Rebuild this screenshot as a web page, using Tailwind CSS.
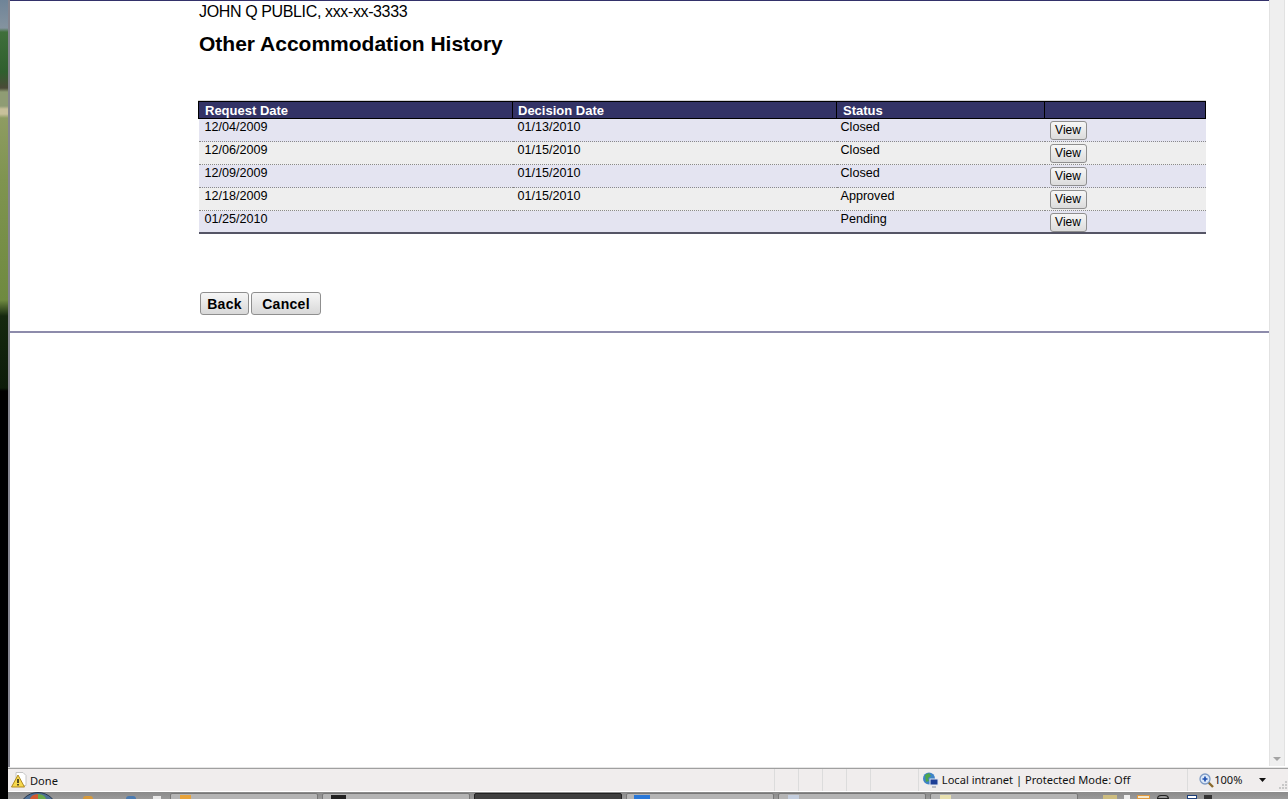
<!doctype html>
<html>
<head>
<meta charset="utf-8">
<title>Other Accommodation History</title>
<script src="https://cdn.jsdelivr.net/npm/@tailwindcss/browser@4"></script>
</head>
<body class="h-[799px] w-[1288px] overflow-hidden bg-white font-['Liberation_Sans',Arial,sans-serif] text-black">
  <div class="flex h-[768px] border-b border-[#e6e6e6]">
    <!-- desktop wallpaper showing at the window edge -->
    <div class="-mb-px w-2 shrink-0 bg-[linear-gradient(to_bottom,#6f8498_0px,#84939f_28px,#3f6f3a_32px,#2f5f2e_72px,#4a4a38_88px,#8f9c74_92px,#8f9c74_106px,#c8c09a_109px,#c8c09a_114px,#8e9c62_118px,#7f9450_180px,#6f8a40_300px,#16280f_316px,#0c1c0a_388px,#000_391px)]"></div>
    <div class="w-0.5 shrink-0 bg-[#85858f]"></div>
    <main class="w-[1259px] shrink-0">
      <div class="h-[333px] border-b-2 border-[#8d8bab]">
        <div class="h-px bg-[#33316a]"></div>
        <div class="ml-[189px] w-[1007px]">
          <p class="mt-[2px] text-base leading-[18px] tracking-[-0.37px]">JOHN Q PUBLIC, xxx-xx-3333</p>
          <h1 class="mt-[11px] text-[21px] leading-[24px] font-bold">Other Accommodation History</h1>
          <table class="mt-[45px] -ml-px w-[1008px] table-fixed border-collapse text-[12.6px] shadow-[0_-1px_0_#d4d4d4]">
            <thead>
              <tr class="h-[17px] bg-[#333366] text-left text-[13px] text-white">
                <th class="w-[314px] border border-black pl-[6px] leading-[15px] font-bold">Request Date</th>
                <th class="w-[324px] border border-black pl-[5px] leading-[15px] font-bold">Decision Date</th>
                <th class="w-[208px] border border-black pl-[6px] leading-[15px] font-bold">Status</th>
                <th class="border border-black"></th>
              </tr>
            </thead>
            <tbody>
              <tr class="h-[23px] border-b border-dotted border-[#8a8a8a] bg-[#e4e4f1] align-top">
                <td class="pl-[6px] leading-[17px]">12/04/2009</td>
                <td class="pl-[5px] leading-[17px]">01/13/2010</td>
                <td class="pl-[4px] leading-[17px]">Closed</td>
                <td class="pl-[5px] pt-[2px]"><button class="block h-[19px] w-[37px] rounded-[3px] border border-[#8f8f8f] bg-[linear-gradient(#f6f6f6,#dcdcdc)] text-xs leading-[17px] text-black">View</button></td>
              </tr>
              <tr class="h-[23px] border-b border-dotted border-[#8a8a8a] bg-[#eeeeee] align-top">
                <td class="pl-[6px] leading-[17px]">12/06/2009</td>
                <td class="pl-[5px] leading-[17px]">01/15/2010</td>
                <td class="pl-[4px] leading-[17px]">Closed</td>
                <td class="pl-[5px] pt-[2px]"><button class="block h-[19px] w-[37px] rounded-[3px] border border-[#8f8f8f] bg-[linear-gradient(#f6f6f6,#dcdcdc)] text-xs leading-[17px] text-black">View</button></td>
              </tr>
              <tr class="h-[23px] border-b border-dotted border-[#8a8a8a] bg-[#e4e4f1] align-top">
                <td class="pl-[6px] leading-[17px]">12/09/2009</td>
                <td class="pl-[5px] leading-[17px]">01/15/2010</td>
                <td class="pl-[4px] leading-[17px]">Closed</td>
                <td class="pl-[5px] pt-[2px]"><button class="block h-[19px] w-[37px] rounded-[3px] border border-[#8f8f8f] bg-[linear-gradient(#f6f6f6,#dcdcdc)] text-xs leading-[17px] text-black">View</button></td>
              </tr>
              <tr class="h-[23px] border-b border-dotted border-[#8a8a8a] bg-[#eeeeee] align-top">
                <td class="pl-[6px] leading-[17px]">12/18/2009</td>
                <td class="pl-[5px] leading-[17px]">01/15/2010</td>
                <td class="pl-[4px] leading-[17px]">Approved</td>
                <td class="pl-[5px] pt-[2px]"><button class="block h-[19px] w-[37px] rounded-[3px] border border-[#8f8f8f] bg-[linear-gradient(#f6f6f6,#dcdcdc)] text-xs leading-[17px] text-black">View</button></td>
              </tr>
              <tr class="h-[22px] border-b-2 border-[#555566] bg-[#e4e4f1] align-top">
                <td class="pl-[6px] leading-[17px]">01/25/2010</td>
                <td class="pl-[5px] leading-[17px]"></td>
                <td class="pl-[4px] leading-[17px]">Pending</td>
                <td class="pl-[5px] pt-[2px]"><button class="block h-[19px] w-[37px] rounded-[3px] border border-[#8f8f8f] bg-[linear-gradient(#f6f6f6,#dcdcdc)] text-xs leading-[17px] text-black">View</button></td>
              </tr>
            </tbody>
          </table>
          <div class="mt-[58px] ml-px flex gap-0.5">
            <button class="h-[23px] w-[49px] rounded-[3px] border border-[#8f8f8f] bg-[linear-gradient(#f6f6f6,#d8d8d8)] text-sm font-bold tracking-[0.3px]">Back</button>
            <button class="h-[23px] w-[70px] rounded-[3px] border border-[#8f8f8f] bg-[linear-gradient(#f6f6f6,#d8d8d8)] text-sm font-bold tracking-[0.3px]">Cancel</button>
          </div>
        </div>
      </div>
    </main>
    <!-- disabled scrollbar -->
    <div class="mb-px flex w-4 shrink-0 flex-col justify-end border-x border-[#e2e2e2] bg-[#efefef] pb-[5px]">
      <svg class="mx-auto" width="8" height="4" viewBox="0 0 8 4"><path d="M0 0h8L4 4z" fill="#a4a4a4"/></svg>
    </div>
  </div>
  <div class="flex h-[31px]">
    <div class="w-2 shrink-0 bg-black"></div>
    <div class="w-[1280px]">
      <!-- status bar -->
      <footer class="flex h-[24px] items-center border-t border-b border-t-[#a0a0a0] border-b-white bg-[#f0eded] font-['Noto_Sans','Open_Sans',sans-serif] text-[11.1px] text-[#111]">
        <svg class="ml-[3px] shrink-0" width="16" height="16" viewBox="0 0 16 16">
          <path d="M5 0.500h7l3 3v10H5z" fill="#fff" stroke="#c4c4c4"/>
          <path d="M7 3L13.500 15H0.500z" fill="#f6d84c" stroke="#b08a20"/>
          <path d="M6.300 7h1.400v4H6.300zM6.300 12h1.400v1.500H6.300z" fill="#111"/>
        </svg>
        <span class="ml-[3px] w-[746px] pt-px leading-none">Done</span>
        <span class="h-full w-6 border-l border-[#dcdcdc]"></span>
        <span class="h-full w-6 border-l border-[#dcdcdc]"></span>
        <span class="h-full w-6 border-l border-[#dcdcdc]"></span>
        <span class="h-full w-6 border-l border-[#dcdcdc]"></span>
        <span class="h-full w-12 border-l border-[#dcdcdc]"></span>
        <span class="flex h-full w-[270px] items-center border-l border-[#dcdcdc] pl-[3px]">
          <svg class="shrink-0" width="17" height="17" viewBox="0 0 17 17">
            <circle cx="7" cy="6.500" r="6" fill="#3f83c6"/>
            <path d="M3 3l4-2 2 3-3 2 1 3-3 1zM10 8l3-1v3l-2 1z" fill="#4fa64a"/>
            <rect x="8" y="7" width="8" height="6" fill="#1c3e96" stroke="#dfe6f2"/>
            <path d="M10 14h4v2h-4z" fill="#b8bcc4"/>
          </svg>
          <span class="ml-[3px] whitespace-nowrap pt-px">Local intranet | Protected Mode: Off</span>
        </span>
        <span class="flex h-full w-[83px] items-center border-l border-[#dcdcdc] pl-[11px]">
          <svg class="shrink-0" width="15" height="15" viewBox="0 0 15 15">
            <path d="M9 9l5 5" stroke="#8a6a2c" stroke-width="2.400"/>
            <circle cx="6" cy="6" r="5" fill="#dce8f8" stroke="#7d9ac4" stroke-width="1.300"/>
            <path d="M3.500 6h5M6 3.500v5" stroke="#1f4fb0" stroke-width="1.700"/>
          </svg>
          <span class="ml-0 w-[45px] shrink-0">100%</span>
          <svg class="shrink-0" width="7" height="4" viewBox="0 0 7 4"><path d="M0 0h7L3.500 4z" fill="#111"/></svg>
        </span>
        <!-- resize grip -->
        <svg class="mt-[9px] ml-[8px] shrink-0" width="10" height="10" viewBox="0 0 10 10"><path d="M7 1h2v2H7zM4 4h2v2H4zM7 4h2v2H7zM1 7h2v2H1zM4 7h2v2H4zM7 7h2v2H7z" fill="#c8c8c8"/></svg>
      </footer>
      <!-- windows taskbar, clipped by the bottom of the screen -->
      <div class="relative flex h-[7px] items-start gap-1 overflow-hidden bg-[linear-gradient(#8a8a8a,#9a9a9a)] pl-[162px]">
        <svg class="absolute top-0 left-[10px]" width="40" height="7" viewBox="0 0 40 7">
          <circle cx="20" cy="20" r="19.500" fill="#4d6f96" stroke="#26364c"/>
          <path d="M12 7a9 6 0 0 1 8-5v5z" fill="#d25a30"/>
          <path d="M20 2a9 6 0 0 1 8 5h-8z" fill="#6aa84a"/>
        </svg>
        <span class="absolute top-[4px] left-[75px] h-[3px] w-[10px] rounded-t-full bg-[#d89a3a]"></span>
        <span class="absolute top-[4px] left-[118px] h-[3px] w-[10px] rounded-t-full bg-[#4a7ab0]"></span>
        <span class="absolute top-[4px] left-[145px] h-[3px] w-[8px] bg-[#e8e8e8]"></span>
        <div class="mt-px h-[7px] w-[148px] shrink-0 rounded-t-[2px] border border-[#777] bg-[#b4b4b4] pt-px pl-[9px]"><div class="h-[5px] w-[11px] bg-[#e8a33a]"></div></div>
        <div class="mt-px h-[7px] w-[148px] shrink-0 rounded-t-[2px] border border-[#777] bg-[#b4b4b4] pt-px pl-[8px]"><div class="h-[5px] w-[15px] bg-[#222]"></div></div>
        <div class="mt-px h-[7px] w-[148px] shrink-0 rounded-t-[2px] border border-[#222] bg-[#404040]"></div>
        <div class="mt-px h-[7px] w-[148px] shrink-0 rounded-t-[2px] border border-[#777] bg-[#b4b4b4] pt-px pl-[7px]"><div class="h-[5px] w-[16px] bg-[#2a78d8]"></div></div>
        <div class="mt-px h-[7px] w-[148px] shrink-0 rounded-t-[2px] border border-[#777] bg-[#b4b4b4] pt-px pl-[9px]"><div class="h-[5px] w-[11px] bg-[#c4cede]"></div></div>
        <div class="mt-px h-[7px] w-[148px] shrink-0 rounded-t-[2px] border border-[#777] bg-[#b4b4b4] pt-px pl-[9px]"><div class="h-[5px] w-[11px] bg-[#e8e0b0]"></div></div>
        <!-- tray icons -->
        <div class="ml-[21px] flex shrink-0 items-start gap-[7px] pt-[3px]">
          <span class="h-[4px] w-[14px] bg-[#cdbd80]"></span>
          <span class="h-[4px] w-[6px] bg-[#eeeeee]"></span>
          <span class="h-[4px] w-[13px] border border-[#e09a40] bg-[#f4e8cc]"></span>
          <span class="h-[4px] w-[12px] rounded-t-full border border-[#222]"></span>
          <span class="ml-[11px] h-[4px] w-[10px] border border-[#1d3f7a] bg-white"></span>
          <span class="h-[4px] w-[8px] bg-[#333]"></span>
        </div>
      </div>
    </div>
  </div>
</body>
</html>
